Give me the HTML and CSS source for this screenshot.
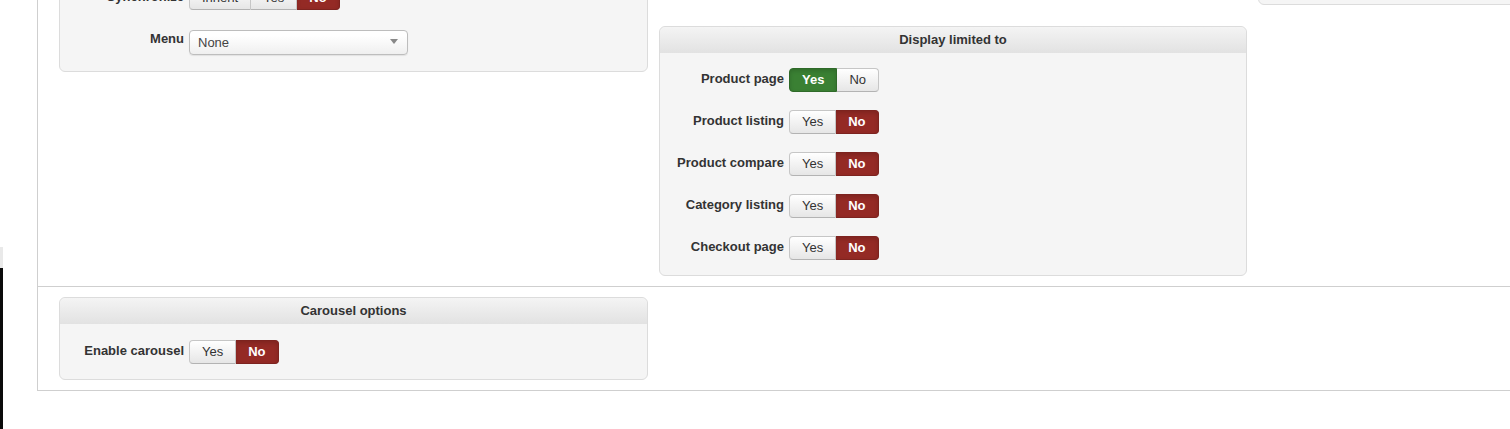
FILE: index.html
```html
<!DOCTYPE html>
<html lang="en">
<head>
    <meta charset="UTF-8">
    <meta name="viewport" content="width=device-width, initial-scale=1.0">
    <title>Module settings</title>
    <link rel="stylesheet" href="styles.css">
</head>
<body>
    <div class="side-strip">
        <div class="strip-top"></div>
        <div class="strip-dark"></div>
    </div>

    <div class="page">
        <div class="settings">
            <div class="section">
                <div class="column">
                    <div class="panel">
                        <div class="panel-head"></div>
                        <div class="panel-body">
                            <div class="row row-spacer"></div>
                            <div class="row">
                                <label class="row-label">Synchronize</label>
                                <div class="btn-group">
                                    <span class="btn">Inherit</span><span class="btn">Yes</span><span class="btn active-no">No</span>
                                </div>
                            </div>
                            <div class="row">
                                <label class="row-label">Menu</label>
                                <div class="select">
                                    <span>None</span>
                                    <span class="caret"></span>
                                </div>
                            </div>
                        </div>
                    </div>
                </div>

                <div class="column">
                    <div class="panel panel-lower">
                        <div class="panel-head">Display limited to</div>
                        <div class="panel-body">
                            <div class="row">
                                <label class="row-label">Product page</label>
                                <div class="btn-group">
                                    <span class="btn active-yes">Yes</span><span class="btn">No</span>
                                </div>
                            </div>
                            <div class="row">
                                <label class="row-label">Product listing</label>
                                <div class="btn-group">
                                    <span class="btn">Yes</span><span class="btn active-no">No</span>
                                </div>
                            </div>
                            <div class="row">
                                <label class="row-label">Product compare</label>
                                <div class="btn-group">
                                    <span class="btn">Yes</span><span class="btn active-no">No</span>
                                </div>
                            </div>
                            <div class="row">
                                <label class="row-label">Category listing</label>
                                <div class="btn-group">
                                    <span class="btn">Yes</span><span class="btn active-no">No</span>
                                </div>
                            </div>
                            <div class="row">
                                <label class="row-label">Checkout page</label>
                                <div class="btn-group">
                                    <span class="btn">Yes</span><span class="btn active-no">No</span>
                                </div>
                            </div>
                        </div>
                    </div>
                </div>

                <div class="column">
                    <div class="panel panel-short"></div>
                </div>
            </div>

            <div class="section">
                <div class="column">
                    <div class="panel">
                        <div class="panel-head">Carousel options</div>
                        <div class="panel-body body-carousel">
                            <div class="row">
                                <label class="row-label">Enable carousel</label>
                                <div class="btn-group">
                                    <span class="btn">Yes</span><span class="btn active-no">No</span>
                                </div>
                            </div>
                        </div>
                    </div>
                </div>
            </div>
        </div>
    </div>
</body>
</html>
```

FILE: styles.css
```css
body {
    margin: 0;
    display: flex;
    align-items: flex-start;
    overflow: hidden;
    font-family: "Liberation Sans", Arial, sans-serif;
    font-size: 13px;
    color: #333;
    background: #fff;
}

/* edge of the window next to this one */
.side-strip {
    width: 3px;
    flex-shrink: 0;
    padding-top: 247px;
}
.strip-top {
    height: 21px;
    background: #e9e9e9;
}
.strip-dark {
    height: 200px;
    background: #0a0a0a;
}

.page {
    margin-left: 34px;
    margin-top: -108px;
    flex-shrink: 0;
}
.settings {
    width: 1900px;
    border-left: 1px solid #cfcfcf;
    border-bottom: 1px solid #cfcfcf;
}

.section {
    display: flex;
    align-items: flex-start;
    gap: 11px;
    padding: 10px 0 10px 21px;
}
.section + .section {
    border-top: 1px solid #cfcfcf;
}
.column {
    width: 588px;
    flex-shrink: 0;
}
.column:first-child {
    width: 589px;
}

.panel {
    background: #f5f5f5;
    border: 1px solid #dcdcdc;
    border-radius: 6px;
}
.panel-lower {
    margin-top: 124px;
}
.panel-short {
    height: 101px;
}
.panel-head {
    height: 26px;
    line-height: 26px;
    text-align: center;
    font-weight: bold;
    color: #333;
    border-radius: 6px 6px 0 0;
    background: linear-gradient(#f4f4f4, #e2e2e2);
}
.panel-body {
    padding: 15px 0;
}
.body-carousel {
    padding-top: 16px;
}

.row {
    display: flex;
    align-items: flex-start;
    margin-bottom: 18px;
}
.row:last-child {
    margin-bottom: 0;
}
.row-spacer {
    height: 24px;
}
.row-label {
    width: 124px;
    margin-right: 5px;
    text-align: right;
    font-weight: bold;
    line-height: 18px;
    padding-top: 2px;
}

.btn-group {
    display: flex;
}
.btn {
    height: 16px;
    line-height: 16px;
    padding: 3px 12px;
    border: 1px solid #c6c6c6;
    border-bottom-color: #b3b3b3;
    background: linear-gradient(#ffffff, #e6e6e6);
    color: #333;
}
.btn + .btn {
    border-left: 0;
}
.btn:first-child {
    border-radius: 4px 0 0 4px;
}
.btn:last-child {
    border-radius: 0 4px 4px 0;
}
.active-no,
.active-yes {
    color: #fff;
    font-weight: bold;
    box-shadow: inset 0 2px 4px rgba(0, 0, 0, 0.15);
}
.active-no {
    background: #942a25;
    border-color: #7d231f;
}
.active-yes {
    background: #3a8033;
    border-color: #2f6a29;
}

.select {
    width: 200px;
    height: 23px;
    margin-top: 2px;
    margin-bottom: 1px;
    padding: 0 9px 0 8px;
    display: flex;
    align-items: center;
    justify-content: space-between;
    border: 1px solid #bdbdbd;
    border-radius: 4px;
    background: linear-gradient(#ffffff 20%, #efefef);
    box-shadow: 0 1px 1px rgba(0, 0, 0, 0.08);
    color: #444;
}
.caret {
    width: 0;
    height: 0;
    margin-top: -2px;
    border-left: 4px solid transparent;
    border-right: 4px solid transparent;
    border-top: 5px solid #888;
}
```
